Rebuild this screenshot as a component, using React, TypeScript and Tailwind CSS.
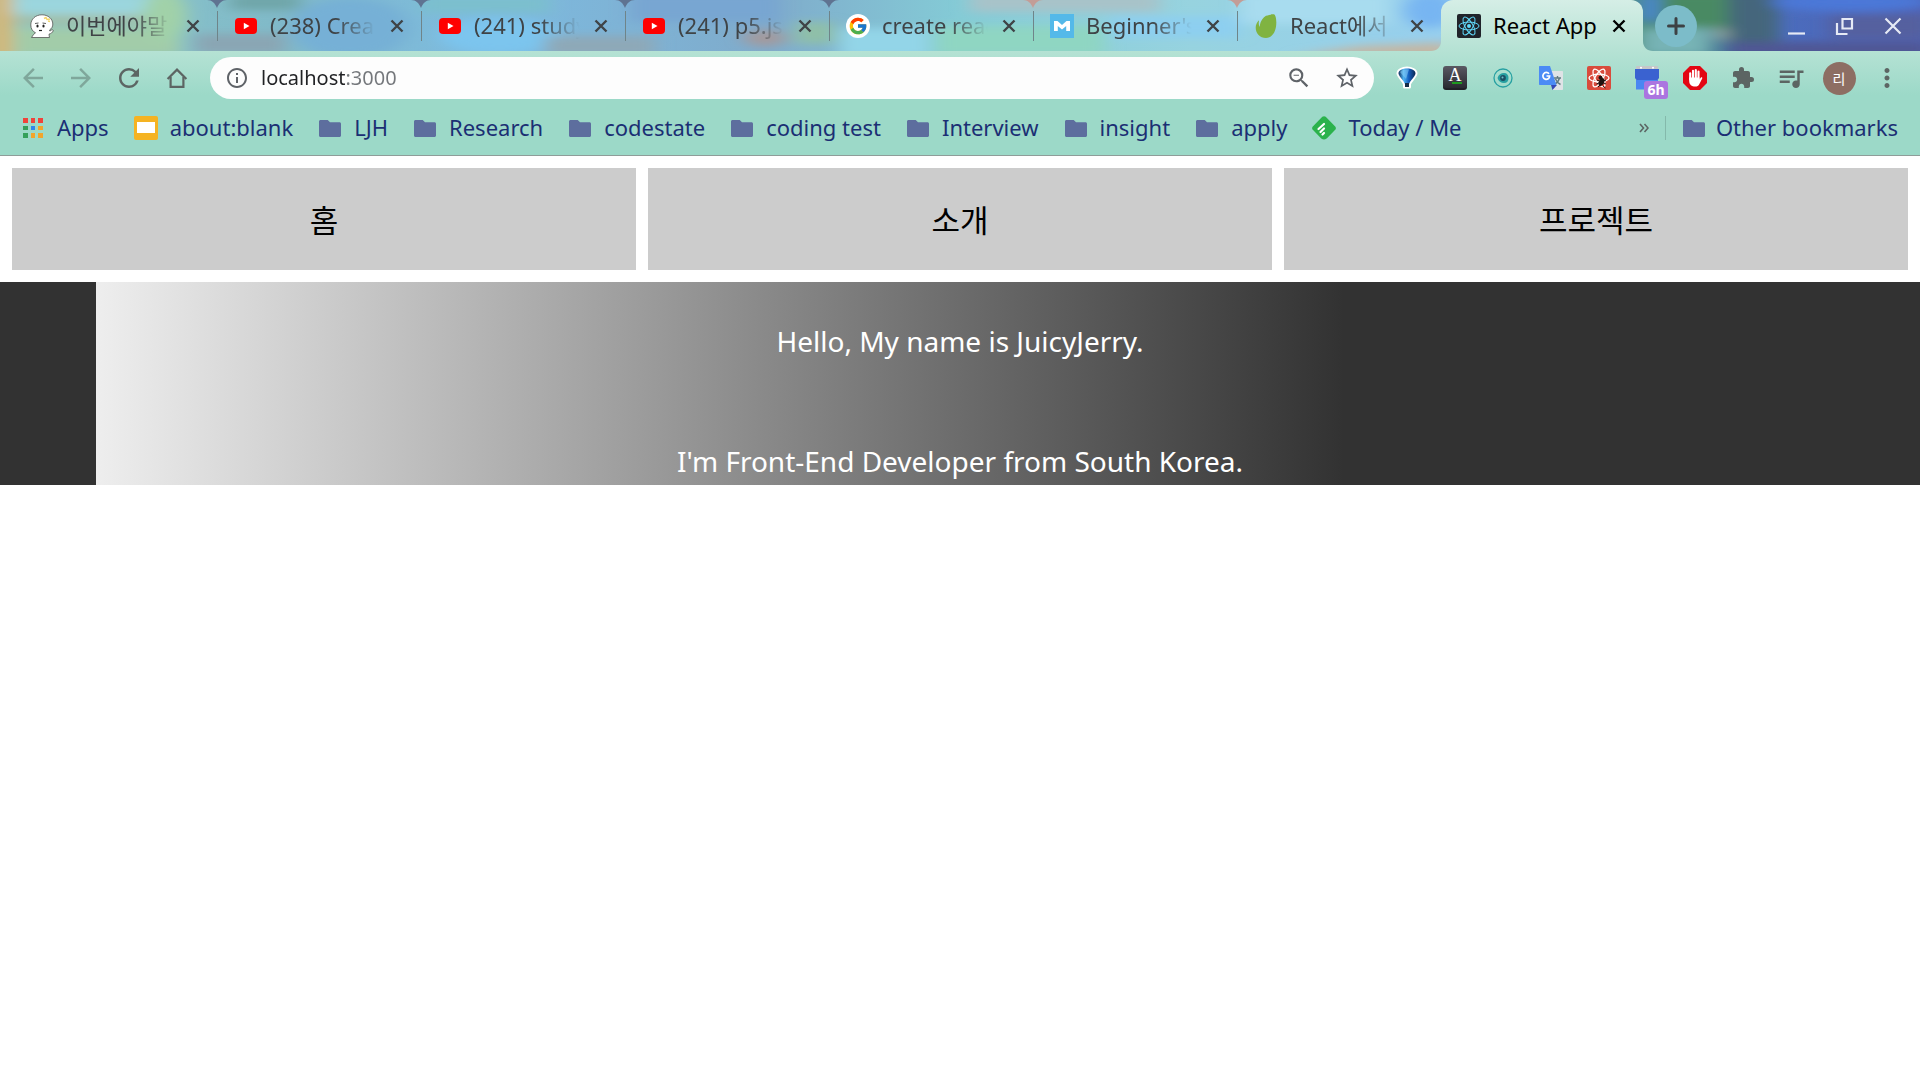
import type { ReactNode } from "react";
import { FcGoogle } from "react-icons/fc";
import {
  MdArrowBack,
  MdArrowForward,
  MdExtension,
  MdInfoOutline,
  MdMoreVert,
  MdOutlineZoomOut,
  MdQueueMusic,
  MdRefresh,
  MdStarBorder,
} from "react-icons/md";

function GhostIcon() {
  return (
    <svg viewBox="0 0 24 24" className="w-6 h-6">
      <path
        d="M12 .8C5.500.8.8 5 .8 11c0 3.800 2 6.500 4.700 7.800L3.500 20.500 1.500 23.500h18c-.3-1.500-.5-2.500-.4-3.500 1.700-.3 3.500-1.200 4.200-3.600l-1.200-.8-2.200 1.500-.4-1C21.700 14.500 22.800 12.800 22.800 10 22.600 4.600 18 .8 12 .8z"
        fill="#fff"
        stroke="#555"
        strokeWidth=".8"
      />
      <path d="M14 4.500l2-1 1 2 3-.5M18 7l2 .5" stroke="#f3d56a" strokeWidth="1.500" fill="none" />
      <path d="M5 9.500l3.500-.5M12.500 9l3.500.5" stroke="#333" strokeWidth=".8" />
      <ellipse cx="7.500" cy="12" rx="1.100" ry="1.600" fill="#222" />
      <ellipse cx="13.500" cy="12" rx="1.100" ry="1.600" fill="#222" />
      <path d="M9 16.500h3" stroke="#222" strokeWidth="1.200" />
    </svg>
  );
}

function YoutubeIcon() {
  return (
    <svg viewBox="0 0 24 24" className="w-6 h-6">
      <rect x="1" y="4" width="22" height="16" rx="4" fill="#ff0000" />
      <path d="M9.800 8.700v6.600l5.700-3.300z" fill="#fff" />
    </svg>
  );
}

function GoogleIcon() {
  return (
    <span className="w-6 h-6 rounded-full bg-white flex items-center justify-center">
      <FcGoogle size={20} />
    </span>
  );
}

function MoozIcon() {
  return (
    <svg viewBox="0 0 24 24" className="w-6 h-6">
      <rect width="24" height="24" fill="#54b9e9" />
      <path d="M4 17V7h3.500l4.500 4 4.500-4H20v10h-3.800v-5L12 15.500 7.800 12v5z" fill="#fff" />
    </svg>
  );
}

function LeafIcon() {
  return (
    <svg viewBox="0 0 24 24" className="w-6 h-6">
      <path
        d="M20.300.6c-1-.6-4.800 0-8.300 1.200C5.800 6 5.900 12.200 5.900 12.500c0 .2-.3.200-.4.100-.8-1.500-1-3.400-.5-5.700.1-.3-.2-.4-.4-.2C3 8.300 1.700 10.700 1.700 13.500 1.700 19.500 6 24 11.900 24 24.500 23.500 23.400 2.400 20.300.6z"
        fill="#80b341"
      />
    </svg>
  );
}

function ReactIcon() {
  return (
    <svg viewBox="0 0 24 24" className="w-6 h-6">
      <rect width="24" height="24" rx="2" fill="#20232a" />
      <g fill="none" stroke="#61dafb" strokeWidth="1">
        <ellipse cx="12" cy="12" rx="10" ry="3.900" />
        <ellipse cx="12" cy="12" rx="10" ry="3.900" transform="rotate(60 12 12)" />
        <ellipse cx="12" cy="12" rx="10" ry="3.900" transform="rotate(120 12 12)" />
      </g>
      <circle cx="12" cy="12" r="2" fill="#61dafb" />
    </svg>
  );
}

function HomeIcon() {
  return (
    <svg viewBox="0 0 24 24" className="w-6 h-6" fill="none" stroke="currentColor" strokeWidth="2.200">
      <path d="M2.600 13L12 3.600 21.400 13" />
      <path d="M5.600 11v9.900h12.800V11" />
    </svg>
  );
}

function AppsIcon() {
  const colors = [
    "#f0433a", "#f0433a", "#f0433a",
    "#34a05a", "#2f86ee", "#f2a52b",
    "#34a05a", "#f2a52b", "#f2a52b",
  ];
  return (
    <span className="w-6 h-6 grid grid-cols-3 gap-[3px] p-[2px]">
      {colors.map((color, i) => (
        <span key={i} style={{ backgroundColor: color }} />
      ))}
    </span>
  );
}

function SlidesIcon() {
  return (
    <svg viewBox="0 0 24 24" className="w-6 h-6">
      <rect width="24" height="24" rx="2" fill="#f5b322" />
      <rect x="3" y="6" width="18" height="11" fill="#fff" />
    </svg>
  );
}

function FolderIcon() {
  return (
    <svg viewBox="0 0 24 24" className="w-6 h-6">
      <path
        d="M2.500 4h7.200l2.300 2.200h9.500c.8 0 1.500.7 1.500 1.500v11.800c0 .8-.7 1.500-1.500 1.500h-19C1.700 21 1 20.300 1 19.500v-14C1 4.700 1.700 4 2.500 4z"
        fill="#5d6e9e"
      />
    </svg>
  );
}

function FeedlyIcon() {
  return (
    <svg viewBox="0 0 24 24" className="w-6 h-6">
      <path
        d="M10.300.8c1-.9 2.500-.9 3.400 0l9.500 9.700c.9.900.9 2.400 0 3.300l-7.700 8c-.7.700-1.500 1.700-3.500 1.700s-3-1-3.500-1.700L.8 13.800c-.9-.9-.9-2.400 0-3.300z"
        fill="#2bb24c"
      />
      <path d="M6.500 13l5.500-5M8.500 16l3.500-3.500M10.500 18.500l1.500-1.500" stroke="#fff" strokeWidth="2.200" strokeLinecap="round" />
    </svg>
  );
}

function VysorIcon() {
  return (
    <svg viewBox="0 0 24 24" className="w-6 h-6">
      <defs>
        <linearGradient id="balloon" x1="0" x2="1" y1="0" y2="0">
          <stop offset="0" stopColor="#12315f" />
          <stop offset=".3" stopColor="#4fb4f3" />
          <stop offset=".6" stopColor="#1560c0" />
          <stop offset="1" stopColor="#0b2750" />
        </linearGradient>
      </defs>
      <path
        d="M12 2C7.500 2 3 4 3 7.500c0 2.500 6.500 8.500 6.500 11V21h5v-2.500c0-2.500 6.500-8.500 6.500-11C21 4 16.500 2 12 2z"
        fill="#fff"
        stroke="#fff"
        strokeWidth="3"
        strokeLinejoin="round"
      />
      <path
        d="M12 2.500C7.500 2.500 3.500 4 3.500 7.500c0 2.500 6.500 8.500 6.500 11V21h4v-2.500c0-2.500 6.500-8.500 6.500-11 0-3.500-4-5-8.500-5z"
        fill="url(#balloon)"
      />
      <path d="M10 17h4v4h-4z" fill="#142c48" />
      <path d="M5 6c3-3 7-3 9-2.500L11 13z" fill="#8fd3fa" opacity=".5" />
    </svg>
  );
}

function DictionaryIcon() {
  return (
    <span className="relative w-6 h-6 rounded-[3px] bg-linear-to-b from-[#5a5963] to-[#2a2a31] border-b-2 border-[#202026] flex justify-center">
      <span className="font-['Liberation_Serif',serif] text-lg leading-[18px] text-white">A</span>
      <span className="absolute left-[9px] bottom-1 w-[10px] h-[2px] bg-[#1f9a1f]" />
    </span>
  );
}

function EyeIcon() {
  return (
    <svg viewBox="0 0 24 24" className="w-6 h-6">
      <circle cx="12" cy="12" r="9" fill="none" stroke="#27a0a2" strokeWidth="1.300" />
      <path d="M6.500 12C7.500 8.500 10 7 13 7c3 0 4.500 2 4.500 5s-1.500 5-4.500 5c-3 0-5.500-1.500-6.500-5z" fill="#27a0a2" />
      <circle cx="12" cy="12" r="2.900" fill="#1c4f63" />
      <circle cx="11.500" cy="11.500" r="1" fill="#6fc3c8" />
    </svg>
  );
}

function TranslateIcon() {
  return (
    <svg viewBox="0 0 24 24" className="w-6 h-6">
      <path d="M9 5h14c.6 0 1 .4 1 1v17c0 .6-.4 1-1 1h-9z" fill="#dfe3e6" />
      <path d="M12 19h6l-4.500 5z" fill="#3547b5" />
      <path d="M15 12h7M18.500 10v2M20.500 12c-.8 3-2.500 5-4.500 6M16.500 13c1 2.500 3 4.500 5 5.500" stroke="#5f7a80" strokeWidth="1.400" fill="none" />
      <path d="M1 0h10l6.500 19H1c-.6 0-1-.4-1-1V1c0-.6.400-1 1-1z" fill="#4b8bf5" />
      <path d="M10 7.800A3.400 3.400 0 1 0 10.700 10H7.500" stroke="#fff" strokeWidth="1.700" fill="none" />
    </svg>
  );
}

function ReactDebugIcon() {
  return (
    <svg viewBox="0 0 24 24" className="w-6 h-6">
      <rect width="24" height="24" rx="2" fill="#d94b3c" />
      <g fill="none" stroke="#fff" strokeWidth="1.300">
        <ellipse cx="12" cy="12" rx="10" ry="3.900" />
        <ellipse cx="12" cy="12" rx="10" ry="3.900" transform="rotate(60 12 12)" />
        <ellipse cx="12" cy="12" rx="10" ry="3.900" transform="rotate(120 12 12)" />
      </g>
      <ellipse cx="14.500" cy="16" rx="2.500" ry="4.200" transform="rotate(25 14.500 16)" fill="#1d1310" />
      <circle cx="13.500" cy="11.800" r="2" fill="#1d1310" />
      <path d="M10 14l9 4M9.500 18l9.500-4M11 21l7-7M16 20l2.500 2" stroke="#1d1310" strokeWidth="1" />
    </svg>
  );
}

function CalendarIcon() {
  return (
    <span className="relative w-6 h-6">
      <svg viewBox="0 0 24 24" className="w-6 h-6">
        <rect x="1" width="22" height="5" rx="1" fill="#c5c7c9" />
        <circle cx="6" cy="1.800" r="1" fill="#fff" />
        <circle cx="18" cy="1.800" r="1" fill="#fff" />
        <path d="M0 3h24v9l-1.500 2H1.500L0 12z" fill="#3a62d0" />
        <path d="M1 14h22v9.500H1z" fill="#4a87f2" />
      </svg>
      <span className="absolute left-[9px] top-[15px] w-6 h-[18px] rounded-[3px] bg-[#ab75e0] text-white text-sm leading-[18px] font-bold text-center">
        6h
      </span>
    </span>
  );
}

function BlockIcon() {
  return (
    <svg viewBox="0 0 24 24" className="w-6 h-6">
      <path d="M7 0h10l7 7v10l-7 7H7l-7-7V7z" fill="#e30613" />
      <path
        d="M7.200 7.200v6.300M10 4.800v8M12.800 4v8.500M15.500 5.500v7.500"
        stroke="#fff"
        strokeWidth="2.100"
        strokeLinecap="round"
      />
      <path d="M6.200 11.500h10.300v2l1.200-1.700c.8-.9 1.900-.3 1.500.8L16.400 18c-.9 1.900-2.200 2.600-4.200 2.600-3.500 0-6-2-6-5.600z" fill="#fff" />
    </svg>
  );
}

const tabs: { title: string; icon: ReactNode }[] = [
  { title: "이번에야말", icon: <GhostIcon /> },
  { title: "(238) Crea", icon: <YoutubeIcon /> },
  { title: "(241) study", icon: <YoutubeIcon /> },
  { title: "(241) p5.js", icon: <YoutubeIcon /> },
  { title: "create reac", icon: <GoogleIcon /> },
  { title: "Beginner's", icon: <MoozIcon /> },
  { title: "React에서", icon: <LeafIcon /> },
];

const bookmarks: { title: string; icon: ReactNode }[] = [
  { title: "Apps", icon: <AppsIcon /> },
  { title: "about:blank", icon: <SlidesIcon /> },
  { title: "LJH", icon: <FolderIcon /> },
  { title: "Research", icon: <FolderIcon /> },
  { title: "codestate", icon: <FolderIcon /> },
  { title: "coding test", icon: <FolderIcon /> },
  { title: "Interview", icon: <FolderIcon /> },
  { title: "insight", icon: <FolderIcon /> },
  { title: "apply", icon: <FolderIcon /> },
  { title: "Today / Me", icon: <FeedlyIcon /> },
];

const extensions: { name: string; icon: ReactNode }[] = [
  { name: "Vysor", icon: <VysorIcon /> },
  { name: "Dictionary", icon: <DictionaryIcon /> },
  { name: "Eye", icon: <EyeIcon /> },
  { name: "Translate", icon: <TranslateIcon /> },
  { name: "React Developer Tools", icon: <ReactDebugIcon /> },
  { name: "Calendar", icon: <CalendarIcon /> },
  { name: "AdBlock", icon: <BlockIcon /> },
  { name: "Extensions", icon: <MdExtension size={24} /> },
  { name: "Media", icon: <MdQueueMusic size={30} /> },
];

// painted theme image behind the tabs
function ThemeArt() {
  return (
    <svg
      className="absolute inset-0 w-full h-full"
      viewBox="0 0 1920 51"
      preserveAspectRatio="none"
      aria-hidden="true"
    >
      <defs>
        <filter id="soft" x="-20%" y="-50%" width="140%" height="200%">
          <feGaussianBlur stdDeviation="9 4" />
        </filter>
        <linearGradient id="base">
          <stop offset="0" stopColor="#8ec9cb" />
          <stop offset=".15" stopColor="#80b9c8" />
          <stop offset=".25" stopColor="#7dbbe0" />
          <stop offset=".4" stopColor="#7fabcb" />
          <stop offset=".5" stopColor="#84cbd6" />
          <stop offset=".62" stopColor="#97d3df" />
          <stop offset=".75" stopColor="#97cfee" />
          <stop offset=".86" stopColor="#4a8a74" />
          <stop offset=".93" stopColor="#4b6cbd" />
          <stop offset="1" stopColor="#4f62b4" />
        </linearGradient>
      </defs>
      <rect width="1920" height="51" fill="url(#base)" />
      <g filter="url(#soft)">
        <rect x="-10" y="-10" width="22" height="70" fill="#d9b56f" />
        <rect x="12" y="-6" width="158" height="22" fill="#9bd6de" />
        <rect x="14" y="15" width="150" height="9" fill="#a3bda4" />
        <rect x="14" y="28" width="166" height="28" fill="#a2cca9" />
        <ellipse cx="165" cy="16" rx="22" ry="26" fill="#a1d1a8" />
        <rect x="195" y="34" width="90" height="20" fill="#8aa6b4" />
        <rect x="230" y="-6" width="70" height="16" fill="#70a6a9" />
        <ellipse cx="350" cy="28" rx="60" ry="30" fill="#76b0d6" />
        <rect x="420" y="-5" width="130" height="18" fill="#7cbfce" />
        <ellipse cx="500" cy="36" rx="60" ry="18" fill="#7cc5ee" />
        <rect x="545" y="36" width="110" height="20" fill="#8ea9b8" />
        <rect x="630" y="-8" width="150" height="30" fill="#78a6d2" />
        <ellipse cx="765" cy="38" rx="22" ry="8" fill="#a49a9c" />
        <rect x="795" y="22" width="40" height="22" fill="#8fbfa8" />
        <rect x="840" y="28" width="90" height="30" fill="#93d5e8" />
        <rect x="935" y="26" width="170" height="30" fill="#8fd6c2" />
        <rect x="970" y="-8" width="190" height="20" fill="#a8c3c9" />
        <rect x="1110" y="16" width="130" height="22" fill="#8dcff0" />
        <rect x="1240" y="-8" width="150" height="32" fill="#a8dcef" />
        <path d="M1290 56l70-10 90-4v18z" fill="#c3b7a4" />
        <ellipse cx="1430" cy="10" rx="26" ry="18" fill="#77b5f2" />
        <rect x="1640" y="-6" width="28" height="28" fill="#4a86d0" />
        <rect x="1660" y="-8" width="75" height="36" fill="#488a63" />
        <rect x="1640" y="28" width="70" height="28" fill="#77b3b5" />
        <rect x="1715" y="28" width="25" height="12" fill="#8fa59c" />
        <rect x="1728" y="-8" width="50" height="70" fill="#45667c" />
        <rect x="1730" y="42" width="200" height="16" fill="#4f5794" />
        <ellipse cx="1850" cy="2" rx="80" ry="10" fill="#4b78d8" />
        <rect x="1830" y="14" width="100" height="24" fill="#54619f" />
      </g>
    </svg>
  );
}

function Close() {
  return (
    <svg viewBox="0 0 20 20" className="w-5 h-5" stroke="currentColor" strokeWidth="2.400">
      <path d="M4.500 4.500l11 11M15.500 4.500l-11 11" />
    </svg>
  );
}

function TabStrip() {
  return (
    <div className="relative flex h-[51px] overflow-hidden pl-[13px] text-[22px] text-[#3f4346]">
      <ThemeArt />
      {tabs.map((tab, i) => (
        <div key={i} className="relative flex items-center w-[204px] shrink pl-[17px]">
          {i > 0 && <span className="absolute left-0 w-px h-[30px] bg-[#6f8489]" />}
          {i > 0 && (
            <svg viewBox="0 0 20 8" className="absolute -left-[10px] top-0 w-5 h-2">
              <path d="M0 0h20c-5 0-8 3-10 8C8 3 5 0 0 0z" fill={i > 4 ? "#c39d97" : "#5f7391"} />
            </svg>
          )}
          {tab.icon}
          <span className="ml-3 pb-[2px] w-[110px] overflow-hidden whitespace-nowrap leading-8 mask-r-from-60% mask-r-to-96%">
            {tab.title}
          </span>
          <button aria-label="Close tab" className="ml-[7px]">
            <Close />
          </button>
        </div>
      ))}
      <div className="relative flex items-center w-[202px] pl-[16px] rounded-t-xl bg-linear-to-b from-[#d5eee6] to-[#b5e2d4] text-black">
        <svg viewBox="0 0 10 10" className="absolute -left-[10px] bottom-0 w-[10px] h-[10px]">
          <path d="M10 0v10H0c6 0 10-4 10-10z" fill="#b5e2d4" />
        </svg>
        <svg viewBox="0 0 10 10" className="absolute -right-[10px] bottom-0 w-[10px] h-[10px]">
          <path d="M0 0v10h10C4 10 0 6 0 0z" fill="#b5e2d4" />
        </svg>
        <ReactIcon />
        <span className="ml-3 pb-[2px] w-[106px] whitespace-nowrap leading-8">React App</span>
        <button aria-label="Close tab" className="ml-[10px]">
          <Close />
        </button>
      </div>
      <button
        aria-label="New tab"
        className="relative self-center ml-3 w-[42px] h-[42px] rounded-full bg-[#7cbcc9] flex items-center justify-center text-[#3d4144]"
      >
        <svg viewBox="0 0 20 20" className="w-5 h-5" stroke="currentColor" strokeWidth="3" strokeLinecap="round">
          <path d="M10 2.500v15M2.500 10h15" />
        </svg>
      </button>
      <div className="relative ml-auto mr-[3px] flex items-center text-[#e6eaf5]">
        <button aria-label="Minimize" className="w-12 h-6 flex justify-center">
          <svg viewBox="0 0 24 24" className="w-6 h-6" stroke="currentColor" strokeWidth="2.200">
            <path d="M3 19.500h17" />
          </svg>
        </button>
        <button aria-label="Restore" className="w-12 h-6 flex justify-center">
          <svg viewBox="0 0 24 24" className="w-6 h-6" stroke="currentColor" strokeWidth="2.200" fill="none">
            <path d="M9.500 5H19v9.500H9.500zM4 9v11h10.500" />
          </svg>
        </button>
        <button aria-label="Close window" className="w-12 h-6 flex justify-center">
          <svg viewBox="0 0 24 24" className="w-6 h-6" stroke="currentColor" strokeWidth="2.200">
            <path d="M4.500 4.500l15 15M19.500 4.500l-15 15" />
          </svg>
        </button>
      </div>
    </div>
  );
}

function Toolbar() {
  return (
    <div className="flex items-center h-[54px] px-[9px] text-[#5c6563]">
      <button aria-label="Back" className="w-12 flex justify-center text-[#7fa79b]">
        <MdArrowBack size={30} />
      </button>
      <button aria-label="Forward" className="w-12 flex justify-center text-[#7fa79b]">
        <MdArrowForward size={30} />
      </button>
      <button aria-label="Reload" className="w-12 flex justify-center">
        <MdRefresh size={30} />
      </button>
      <button aria-label="Home" className="w-12 flex justify-center">
        <HomeIcon />
      </button>
      <div className="flex items-center flex-1 h-[42px] mx-[9px] pl-[15px] pr-[3px] rounded-full bg-[#fdfdfd] text-[#5f6368]">
        <MdInfoOutline size={24} />
        <input
          aria-label="Address"
          defaultValue="localhost:3000"
          className="flex-1 ml-3 text-xl outline-none text-transparent bg-clip-text bg-linear-to-r from-[#202124] from-[86px] to-[#74777b] to-[86px]"
        />
        <button aria-label="Zoom" className="w-12 flex justify-center">
          <MdOutlineZoomOut size={26} />
        </button>
        <button aria-label="Bookmark this page" className="w-12 flex justify-center">
          <MdStarBorder size={26} />
        </button>
      </div>
      {extensions.map((extension) => (
        <button key={extension.name} aria-label={extension.name} className="w-12 flex justify-center">
          {extension.icon}
        </button>
      ))}
      <button className="w-12 flex justify-center">
        <span className="w-[33px] h-[33px] rounded-full bg-[#8d6e63] text-white text-sm leading-[33px] text-center">
          리
        </span>
      </button>
      <button aria-label="Menu" className="w-12 flex justify-center">
        <MdMoreVert size={30} />
      </button>
    </div>
  );
}

function BookmarksBar() {
  return (
    <div className="flex items-center h-[50px] pl-[21px] pr-[22px] pb-1 gap-[25px] text-[22px] text-[#1b2f74] whitespace-nowrap">
      {bookmarks.map((bookmark) => (
        <a key={bookmark.title} href="#" className="flex items-center gap-3">
          {bookmark.icon}
          <span className="pb-[2px]">{bookmark.title}</span>
        </a>
      ))}
      <div className="flex items-center ml-auto gap-4">
        <button aria-label="More bookmarks" className="text-[#5c6563]">
          <svg viewBox="0 0 10 10" className="w-[10px] h-[10px]" fill="none" stroke="currentColor" strokeWidth="1.600">
            <path d="M1 1l3.500 4L1 9M5.500 1L9 5 5.500 9" />
          </svg>
        </button>
        <span className="w-px h-6 bg-[#84b9ab]" />
        <a href="#" className="flex items-center gap-[10px]">
          <FolderIcon />
          <span className="pb-[2px]">Other bookmarks</span>
        </a>
      </div>
    </div>
  );
}

function Nav() {
  const items = ["홈", "소개", "프로젝트"];
  return (
    <nav className="grid grid-cols-3 gap-3 p-3 text-[31px] text-black">
      {items.map((item) => (
        <a key={item} href="#" className="bg-[#cccccc] pt-[28px] pb-[26px] leading-[48px] text-center">
          {item}
        </a>
      ))}
    </nav>
  );
}

function Intro() {
  return (
    <section className="pt-[44px] text-center text-[28px] leading-[30px] text-white bg-[linear-gradient(to_right,#323232_5%,#eeeeee_5%,#323232_70%)]">
      <p className="mb-[90px]">Hello, My name is JuicyJerry.</p>
      <p className="pb-[9px]">I'm Front-End Developer from South Korea.</p>
    </section>
  );
}

export default function App() {
  return (
    <div className="min-h-screen bg-white font-['Noto_Sans','Noto_Sans_CJK_KR',sans-serif]">
      <header className="border-b border-[#8f9d99] bg-[linear-gradient(to_bottom,#b5e2d4_51px,#9cd9c8_95px)]">
        <TabStrip />
        <Toolbar />
        <BookmarksBar />
      </header>
      <main>
        <Nav />
        <Intro />
      </main>
    </div>
  );
}
